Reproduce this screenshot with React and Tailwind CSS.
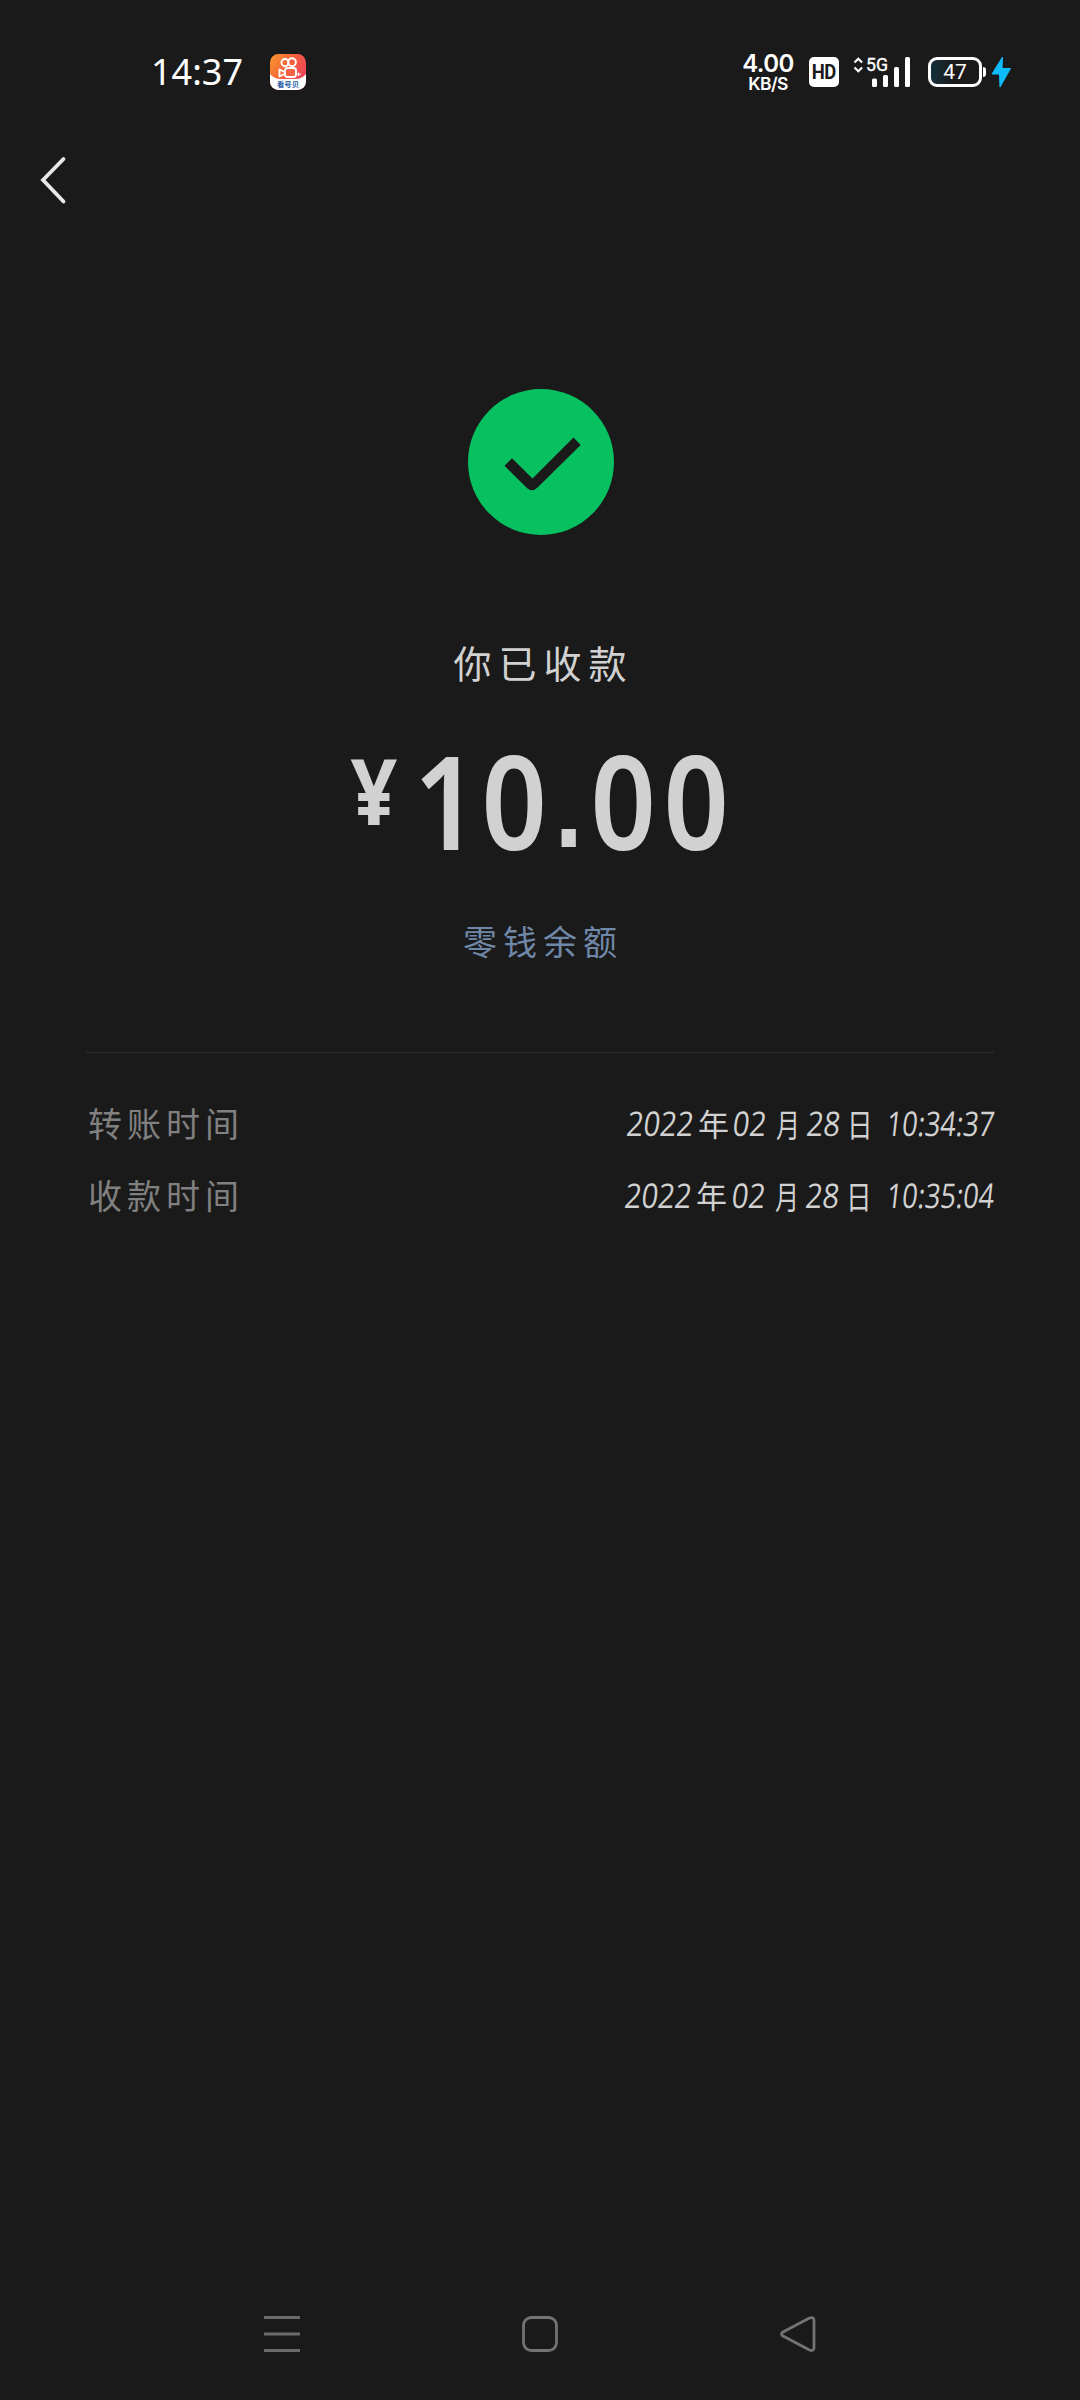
const CJK = "font-['Noto_Sans_CJK_SC',sans-serif]";

function KwaiIcon() {
  return (
    <svg width="36" height="36" viewBox="0 0 36 36" className="block">
      <defs>
        <linearGradient id="kwai" x1="0" y1="0" x2="1" y2="0.6">
          <stop offset="0" stopColor="#f89b2c" />
          <stop offset="0.5" stopColor="#f4633a" />
          <stop offset="1" stopColor="#ee4160" />
        </linearGradient>
        <clipPath id="tile"><rect width="36" height="36" rx="8.5" /></clipPath>
      </defs>
      <g clipPath="url(#tile)">
        <rect width="36" height="36" fill="url(#kwai)" />
        <path d="M0 20Q4 25 11 25H25Q32 25 36 20V36H0Z" fill="#fff" />
        <g fill="none" stroke="#fff" strokeWidth="1.9">
          <circle cx="15" cy="8.6" r="3.6" />
          <circle cx="22" cy="8.2" r="3.9" />
          <rect x="15" y="14" width="11" height="9" rx="2.5" fill="#f26344" />
          <path d="M9.5 15.5L14.5 18V20L9.5 22.5Z" strokeLinejoin="round" />
        </g>
        <path d="M28.5 18.5V22M27 20.2H31" stroke="#fff" strokeWidth="1" />
        <text x="18" y="32.5" textAnchor="middle" fontSize="7.4" fontWeight="700" fill="#2b5ea8" fontFamily="Noto Sans CJK SC, sans-serif">看号贝</text>
      </g>
    </svg>
  );
}

function StatusBar() {
  return (
    <header className="flex h-36 w-full items-center pl-[151px] text-white">
      <span className="w-[119px] font-['Noto_Sans',sans-serif] text-[36px] leading-9">14:37</span>
      <KwaiIcon />
      <div className="ml-[434px] flex w-[56px] flex-col items-center pt-[2px] font-['Inter',sans-serif] font-semibold">
        <span className="text-[24px] leading-[20px] tracking-[-0.6px]">4.00</span>
        <span className="mt-[1px] text-[17.500px] leading-[18px] tracking-[-0.6px]">KB/S</span>
      </div>
      <span className="ml-[13px] flex h-[30px] w-[30px] items-center justify-center rounded-[5px] bg-white font-['Roboto',sans-serif] text-[21px] font-bold leading-none text-[#1a1a1a]">
        <span className="scale-x-[0.88] tracking-[-0.5px]">HD</span>
      </span>
      <svg width="60" height="44" viewBox="0 -6 60 44" className="ml-[13px] block">
        <path d="M2.5 6.5L6.3 2.8L10.1 6.5M2.5 11.5L6.3 15.2L10.1 11.5" fill="none" stroke="#fff" strokeWidth="2.2" />
        <text x="14" y="14.8" fontSize="18.5" fill="#fff" stroke="#fff" strokeWidth="0.4" textLength="22" lengthAdjust="spacingAndGlyphs" fontFamily="Roboto, sans-serif">5G</text>
        <rect x="20" y="22.500" width="5" height="8.500" rx="1.5" fill="#fff" />
        <rect x="31" y="19" width="5" height="12" rx="1.5" fill="#fff" />
        <rect x="42" y="11" width="5" height="20" rx="1.500" fill="#fff" />
        <rect x="53" y="1" width="5" height="30" rx="1.500" fill="#fff" />
      </svg>
      <div className="ml-[16px] flex h-[30px] w-[54px] items-center justify-center rounded-[9px] border-[3px] border-white bg-gradient-to-r from-[#12303a] to-[#1a1a1a] to-50% font-['Roboto',sans-serif] text-[21px] leading-none">47</div>
      <span className="ml-px h-[10px] w-[3px] rounded-r bg-white" />
      <svg width="20" height="32" viewBox="0 0 20 32" className="ml-[5px] block">
        <path d="M11.500 1L1 18H8.500L9 31L19.500 12.500H11Z" fill="#0fbcfb" stroke="#0fbcfb" strokeLinejoin="round" />
      </svg>
    </header>
  );
}

function Digits({ children, className, scale = "scale-x-[0.86]" }) {
  return (
    <span className={className + " inline-block font-['Open_Sans',sans-serif] text-[34px]"}>
      <span className={scale + " inline-block origin-left -skew-x-8"}>{children}</span>
    </span>
  );
}

function TimeRow({ label, time, width }) {
  return (
    <div className="flex h-[72px] items-center justify-between leading-[48px]">
      <span className={CJK + " text-[34px] tracking-[5px] text-[#808080]"}>{label}</span>
      <span className={width + " flex items-center whitespace-nowrap text-[#d1d1d1]"}>
        <Digits className="w-[71px]">2022</Digits>
        <span className={CJK + " w-[36px] text-[31px]"}>年</span>
        <Digits className="w-[43px]">02</Digits>
        <span className={CJK + " w-[31px] origin-left scale-x-75 text-[32px]"}>月</span>
        <Digits className="w-[41px]">28</Digits>
        <span className={CJK + " w-[41px] origin-left scale-x-[0.8] text-[32px]"}>日</span>
        <Digits className="w-[107px]" scale="scale-x-[0.8]">{time}</Digits>
      </span>
    </div>
  );
}

function Amount() {
  return (
    <div className="ml-[3px] mt-[18px] flex h-[180px] items-start font-['Noto_Sans',sans-serif] text-[130px] font-semibold leading-[180px] text-[#d1d1d1]">
      <span className="mr-[17px] flex w-[48px] justify-center pt-[25px] text-[91px] font-bold leading-[110px]">
        <span className="scale-x-[0.9]">¥</span>
      </span>
      <span className="flex w-[63px] justify-center"><span className="scale-x-[0.88]">1</span></span>
      <span className="flex w-[72px] justify-center"><span className="scale-x-[0.88]">0</span></span>
      <span className="flex w-[37px] justify-center pt-[5px] font-['Liberation_Sans',sans-serif] text-[120px] font-bold"><span className="scale-x-[0.84]">.</span></span>
      <span className="flex w-[73px] justify-center"><span className="scale-x-[0.88]">0</span></span>
      <span className="flex w-[73px] justify-center"><span className="scale-x-[0.88]">0</span></span>
    </div>
  );
}

function NavBar() {
  return (
    <nav className="mt-auto flex h-[118px] items-center justify-between px-[264px] pb-[2px]">
      <svg width="36" height="36" viewBox="0 0 36 36" fill="none" stroke="#6b6b6b" strokeWidth="3">
        <path d="M0 1.500H36M0 18H36M0 34.500H36" />
      </svg>
      <svg width="36" height="36" viewBox="0 0 36 36" fill="none" stroke="#737373" strokeWidth="2.800">
        <rect x="1.500" y="1.500" width="33" height="33" rx="8" />
      </svg>
      <svg width="36" height="36" viewBox="0 0 36 36" fill="none" stroke="#737373" strokeWidth="2.800" strokeLinejoin="round">
        <path d="M3 16L29 2.300Q34 0 34 4.500V31.500Q34 36 29 33.700L3 20Q0 18 3 16Z" />
      </svg>
    </nav>
  );
}

export default function App() {
  return (
    <div className="flex h-[2400px] w-[1080px] flex-col overflow-hidden bg-[#1a1a1a] pb-[6px]">
      <StatusBar />
      <div className="flex h-[72px] items-center pl-[38px]">
        <svg width="32" height="52" viewBox="0 0 32 52" fill="none" stroke="#e8e8e8" strokeWidth="3.800" strokeLinecap="round">
          <path d="M25.500 5L5 26L25.500 47.500" />
        </svg>
      </div>
      <main className="flex flex-col items-center">
        <svg width="146" height="146" viewBox="0 0 146 146" className="ml-[2px] mt-[173px] block">
          <circle cx="73" cy="73" r="73" fill="#07c160" />
          <path d="M36.500 76.700L40.500 72.700L44 69.200L64.500 89.500L105.500 48.500L112.700 56L69.500 98.500Q64.500 103.500 59.500 99.500L36.500 76.700Z" fill="#1a1a1a" />
        </svg>
        <p className={CJK + " mt-[97px] pl-[7px] text-[38px] leading-[60px] tracking-[7px] text-[#d1d1d1]"}>你已收款</p>
        <Amount />
        <p className={CJK + " mt-[21px] pl-[6px] text-[34px] leading-[60px] tracking-[6px] text-[#7088a8]"}>零钱余额</p>
      </main>
      <section className="mx-[86px] mt-[81px] border-t border-[#303030] pt-[34px]">
        <div className="pl-[2px]">
          <TimeRow label="转账时间" time="10:34:37" width="w-[367px]" />
          <TimeRow label="收款时间" time="10:35:04" width="w-[369px]" />
        </div>
      </section>
      <NavBar />
    </div>
  );
}
